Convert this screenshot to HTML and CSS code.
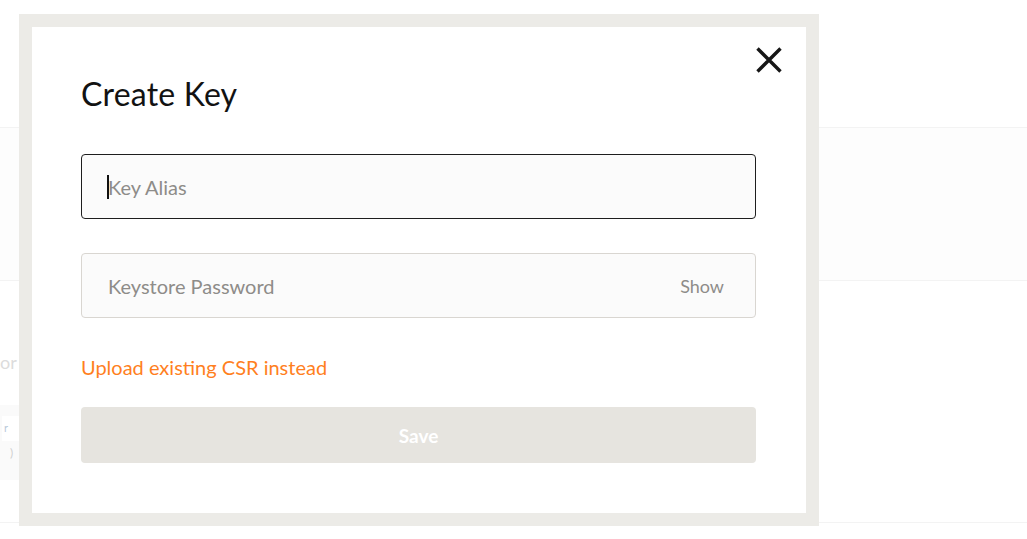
FILE: index.html
```
<!DOCTYPE html>
<html>
<head>
<meta charset="utf-8">
<link rel="stylesheet" href="styles.css">
</head>
<body>
<div class="page">
  <div class="page-head"></div>
  <div class="page-band"></div>
  <div class="page-body">
    <div class="bg-label">or mode</div>
    <div class="bg-card"><span class="bg-chip">r</span><span class="bg-sub">)</span></div>
  </div>
</div>

<div class="modal">
  <div class="modal-inner">
    <button class="close" aria-label="Close">
      <svg width="26" height="26" viewBox="0 0 26 26"><path d="M1.5 1.5 L24.5 24.5 M24.5 1.5 L1.5 24.5" stroke="#161616" stroke-width="3.4" fill="none"/></svg>
    </button>
    <h1 class="title">Create Key</h1>
    <div class="field field-active">
      <span class="caret"></span><span class="placeholder">Key Alias</span>
    </div>
    <div class="field">
      <span class="placeholder">Keystore Password</span>
      <span class="show">Show</span>
    </div>
    <a class="link">Upload existing CSR instead</a>
    <button class="save">Save</button>
  </div>
</div>
</body>
</html>
```
FILE: styles.css
```
* { box-sizing: border-box; }
html, body { margin: 0; padding: 0; }
body {
  width: 1027px;
  height: 539px;
  overflow: hidden;
  background: #ffffff;
  font-family: "Lato", "Noto Sans", sans-serif;
  position: relative;
}
.page { width: 100%; height: 100%; display: flex; flex-direction: column; }
.page-head { height: 128px; border-bottom: 1px solid #f3f3f3; }
.page-band { height: 153px; background: #fdfdfd; border-bottom: 1px solid #f3f3f3; }
.page-body { height: 242px; border-bottom: 1px solid #f3f3f3; position: relative; }
.bg-label {
  position: absolute; left: 0; top: 70px;
  font-size: 18px; color: #dcdcdc;
  white-space: nowrap;
}
.bg-card {
  position: absolute; left: 0; top: 124px; width: 40px; height: 75px;
  background: #fafafa;
}
.bg-chip {
  position: absolute; left: 2px; top: 11px; width: 30px; height: 25px;
  background: #fff; font-size: 11px; color: #b9c9d9; padding: 5px 0 0 2px;
}
.bg-sub { position: absolute; left: 10px; top: 40px; font-size: 12px; color: #d0d0d0; }

.modal {
  position: absolute;
  left: 19px; top: 14px;
  width: 800px; height: 512px;
  background: #ecebe7;
  padding: 13px;
}
.modal-inner {
  position: relative;
  background: #ffffff;
  height: 100%;
  padding: 47px 50px 49px 49px;
  display: flex;
  flex-direction: column;
}
.close {
  position: absolute;
  right: 24px; top: 20px;
  width: 26px; height: 26px;
  padding: 0; border: 0; background: none;
  display: flex;
}
.title {
  margin: 0;
  font-family: "Lato", sans-serif;
  font-weight: 400;
  font-size: 32px;
  line-height: 40px;
  color: #121212;
  letter-spacing: 0.2px;
}
.field {
  margin-top: 40px;
  height: 65px;
  border: 1px solid #d9d6d1;
  border-radius: 4px;
  background: #fbfbfb;
  display: flex;
  align-items: center;
  padding: 0 31px 0 26px;
}
.field + .field { margin-top: 34px; }
.field-active { border-color: #1e1e1e; }
.caret {
  width: 2px; height: 24px; background: #111; margin-left: -1px; margin-right: -1px;
}
.placeholder {
  font-size: 20px;
  color: #8e8c89;
  flex: 1;
}
.show {
  font-size: 18px;
  color: #8e8c89;
}
.link {
  margin-top: 37px;
  font-size: 20px;
  line-height: 24px;
  color: #ff7f1e;
  cursor: pointer;
}
.save {
  margin-top: 28px;
  height: 56px;
  border: 0;
  border-radius: 4px;
  background: #e6e4df;
  color: #ffffff;
  font-family: "Lato", sans-serif;
  font-weight: 700;
  font-size: 19px;
}
```
